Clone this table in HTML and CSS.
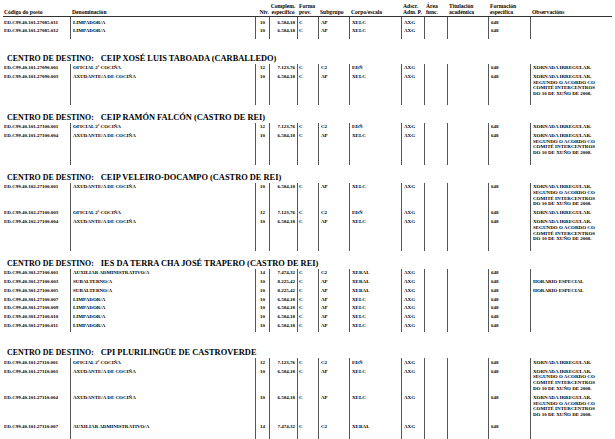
FILE: index.html
```html
<!DOCTYPE html>
<html lang="gl">
<head>
<meta charset="utf-8">
<title>Relación de postos</title>
<link rel="stylesheet" href="styles.css">
</head>
<body>
<div class="page">
  <div class="grid hdr">
    <span class="h">Código do posto</span>
    <span class="h">Denominación</span>
    <span class="h niv">Nív.</span>
    <span class="h comp">Complem.<br>específico</span>
    <span class="h">Forma<br>prov.</span>
    <span class="h">Subgrupo</span>
    <span class="h">Corpo/escala</span>
    <span class="h">Adscr.<br>Adm. P.</span>
    <span class="h">Área<br>func.</span>
    <span class="h">Titulación<br>académica</span>
    <span class="h">Formación<br>específica</span>
    <span class="h">Observacións</span>
  </div>

  <section class="sec">
    <div class="grid row first"><span>ED.C99.40.101.27085.011</span><span>LIMPADOR/A</span><span>10</span><span>6.584,18</span><span>C</span><span>AP</span><span>XELC</span><span>AXG</span><span></span><span></span><span>648</span><span></span></div>
    <div class="grid row"><span>ED.C99.40.101.27085.012</span><span>LIMPADOR/A</span><span>10</span><span>6.584,18</span><span>C</span><span>AP</span><span>XELC</span><span>AXG</span><span></span><span></span><span>648</span><span></span></div>
    <div class="grid row fill f3"><span></span><span></span><span></span><span></span><span></span><span></span><span></span><span></span><span></span><span></span><span></span><span></span></div>
  </section>

  <section class="sec">
    <h2 class="dest d1">CENTRO DE DESTINO:<span class="name">CEIP XOSÉ LUIS TABOADA (CARBALLEDO)</span></h2>
    <div class="grid row"><span>ED.C99.40.101.27090.001</span><span>OFICIAL 2ª COCIÑA</span><span>12</span><span>7.123,76</span><span>C</span><span>C2</span><span>EDÑ</span><span>AXG</span><span></span><span></span><span>648</span><span>XORNADA IRREGULAR.</span></div>
    <div class="grid row"><span>ED.C99.40.101.27090.003</span><span>AXUDANTE/A DE COCIÑA</span><span>10</span><span>6.584,18</span><span>C</span><span>AP</span><span>XELC</span><span>AXG</span><span></span><span></span><span>648</span><span>XORNADA IRREGULAR,<br>SEGUNDO O ACORDO CO<br>COMITÉ INTERCENTROS<br>DO 10 DE XUÑO DE 2008.</span></div>
    <div class="grid row fill f6"><span></span><span></span><span></span><span></span><span></span><span></span><span></span><span></span><span></span><span></span><span></span><span></span></div>
  </section>

  <section class="sec">
    <h2 class="dest">CENTRO DE DESTINO:<span class="name">CEIP RAMÓN FALCÓN (CASTRO DE REI)</span></h2>
    <div class="grid row"><span>ED.C99.40.101.27100.001</span><span>OFICIAL 2ª COCIÑA</span><span>12</span><span>7.123,76</span><span>C</span><span>C2</span><span>EDÑ</span><span>AXG</span><span></span><span></span><span>648</span><span>XORNADA IRREGULAR.</span></div>
    <div class="grid row"><span>ED.C99.40.101.27100.004</span><span>AXUDANTE/A DE COCIÑA</span><span>10</span><span>6.584,18</span><span>C</span><span>AP</span><span>XELC</span><span>AXG</span><span></span><span></span><span>648</span><span>XORNADA IRREGULAR,<br>SEGUNDO O ACORDO CO<br>COMITÉ INTERCENTROS<br>DO 10 DE XUÑO DE 2008.</span></div>
    <div class="grid row fill f7"><span></span><span></span><span></span><span></span><span></span><span></span><span></span><span></span><span></span><span></span><span></span><span></span></div>
  </section>

  <section class="sec">
    <h2 class="dest">CENTRO DE DESTINO:<span class="name">CEIP VELEIRO-DOCAMPO (CASTRO DE REI)</span></h2>
    <div class="grid row"><span>ED.C99.40.102.27100.001</span><span>AXUDANTE/A DE COCIÑA</span><span>10</span><span>6.584,18</span><span>C</span><span>AP</span><span>XELC</span><span>AXG</span><span></span><span></span><span>648</span><span>XORNADA IRREGULAR,<br>SEGUNDO O ACORDO CO<br>COMITÉ INTERCENTROS<br>DO 10 DE XUÑO DE 2008.</span></div>
    <div class="grid row"><span>ED.C99.40.102.27100.003</span><span>OFICIAL 2ª COCIÑA</span><span>12</span><span>7.123,76</span><span>C</span><span>C2</span><span>EDÑ</span><span>AXG</span><span></span><span></span><span>648</span><span>XORNADA IRREGULAR.</span></div>
    <div class="grid row"><span>ED.C99.40.102.27100.004</span><span>AXUDANTE/A DE COCIÑA</span><span>10</span><span>6.584,18</span><span>C</span><span>AP</span><span>XELC</span><span>AXG</span><span></span><span></span><span>648</span><span>XORNADA IRREGULAR,<br>SEGUNDO O ACORDO CO<br>COMITÉ INTERCENTROS<br>DO 10 DE XUÑO DE 2008.</span></div>
    <div class="grid row fill f7"><span></span><span></span><span></span><span></span><span></span><span></span><span></span><span></span><span></span><span></span><span></span><span></span></div>
  </section>

  <section class="sec">
    <h2 class="dest">CENTRO DE DESTINO:<span class="name">IES DA TERRA CHA JOSÉ TRAPERO (CASTRO DE REI)</span></h2>
    <div class="grid row"><span>ED.C99.40.301.27100.001</span><span>AUXILIAR ADMINISTRATIVO/A</span><span>14</span><span>7.474,32</span><span>C</span><span>C2</span><span>XERAL</span><span>AXG</span><span></span><span></span><span>648</span><span></span></div>
    <div class="grid row"><span>ED.C99.40.301.27100.003</span><span>SUBALTERNO/A</span><span>10</span><span>8.225,42</span><span>C</span><span>AP</span><span>XERAL</span><span>AXG</span><span></span><span></span><span>648</span><span>HORARIO ESPECIAL</span></div>
    <div class="grid row"><span>ED.C99.40.301.27100.005</span><span>SUBALTERNO/A</span><span>10</span><span>8.225,42</span><span>C</span><span>AP</span><span>XERAL</span><span>AXG</span><span></span><span></span><span>648</span><span>HORARIO ESPECIAL</span></div>
    <div class="grid row"><span>ED.C99.40.301.27100.007</span><span>LIMPADOR/A</span><span>10</span><span>6.584,18</span><span>C</span><span>AP</span><span>XELC</span><span>AXG</span><span></span><span></span><span>648</span><span></span></div>
    <div class="grid row"><span>ED.C99.40.301.27100.009</span><span>LIMPADOR/A</span><span>10</span><span>6.584,18</span><span>C</span><span>AP</span><span>XELC</span><span>AXG</span><span></span><span></span><span>648</span><span></span></div>
    <div class="grid row"><span>ED.C99.40.301.27100.010</span><span>LIMPADOR/A</span><span>10</span><span>6.584,18</span><span>C</span><span>AP</span><span>XELC</span><span>AXG</span><span></span><span></span><span>648</span><span></span></div>
    <div class="grid row"><span>ED.C99.40.301.27100.011</span><span>LIMPADOR/A</span><span>10</span><span>6.584,18</span><span>C</span><span>AP</span><span>XELC</span><span>AXG</span><span></span><span></span><span>648</span><span></span></div>
    <div class="grid row fill f2"><span></span><span></span><span></span><span></span><span></span><span></span><span></span><span></span><span></span><span></span><span></span><span></span></div>
  </section>

  <section class="sec">
    <h2 class="dest d5">CENTRO DE DESTINO:<span class="name">CPI PLURILINGÜE DE CASTROVERDE</span></h2>
    <div class="grid row"><span>ED.C99.40.101.27110.001</span><span>OFICIAL 2ª COCIÑA</span><span>12</span><span>7.123,76</span><span>C</span><span>C2</span><span>EDÑ</span><span>AXG</span><span></span><span></span><span>648</span><span>XORNADA IRREGULAR.</span></div>
    <div class="grid row"><span>ED.C99.40.101.27110.003</span><span>AXUDANTE/A DE COCIÑA</span><span>10</span><span>6.584,18</span><span>C</span><span>AP</span><span>XELC</span><span>AXG</span><span></span><span></span><span>648</span><span>XORNADA IRREGULAR,<br>SEGUNDO O ACORDO CO<br>COMITÉ INTERCENTROS<br>DO 10 DE XUÑO DE 2008.</span></div>
    <div class="grid row tall"><span>ED.C99.40.101.27110.004</span><span>AXUDANTE/A DE COCIÑA</span><span>10</span><span>6.584,18</span><span>C</span><span>AP</span><span>XELC</span><span>AXG</span><span></span><span></span><span>648</span><span>XORNADA IRREGULAR,<br>SEGUNDO O ACORDO CO<br>COMITÉ INTERCENTROS<br>DO 10 DE XUÑO DE 2008.</span></div>
    <div class="grid row"><span>ED.C99.40.101.27110.007</span><span>AUXILIAR ADMINISTRATIVO/A</span><span>14</span><span>7.474,32</span><span>C</span><span>C2</span><span>XERAL</span><span>AXG</span><span></span><span></span><span>648</span><span></span></div>
    <div class="grid row fill f8"><span></span><span></span><span></span><span></span><span></span><span></span><span></span><span></span><span></span><span></span><span></span><span></span></div>
  </section>
</div>
</body>
</html>
```
FILE: styles.css
```css
html, body {
  margin: 0;
  padding: 0;
  background: #ffffff;
  color: #000000;
}
body {
  width: 615px;
  height: 439px;
  overflow: hidden;
  font-family: "Liberation Serif", "Times New Roman", serif;
}
.page {
  padding: 0 3px;
}
.grid {
  display: grid;
  grid-template-columns: 67px 185px 14px 28px 21px 31px 52px 23px 23px 41px 42px 82px;
}
.hdr {
  height: 16px;
  border-bottom: 1px solid #333;
  align-items: end;
}
.h {
  font-size: 5.6px;
  line-height: 6px;
  font-weight: bold;
  white-space: nowrap;
  padding-left: 2px;
  padding-bottom: 1px;
}
.h:first-child {
  padding-left: 1px;
}
.h.niv {
  text-align: right;
}
.h.comp {
  text-align: center;
  padding-left: 0;
}
.row > span {
  font-size: 5px;
  line-height: 5.8px;
  font-weight: bold;
  white-space: nowrap;
  padding: 1.5px 0 1.5px 2px;
  border-left: 1px solid #555;
}
.row.first > span {
  padding-top: 2.5px;
}
.row.tall > span {
  padding-bottom: 4.5px;
}
.row > span:first-child {
  border-left: none;
  padding-left: 1px;
}
.row > span:nth-child(3) {
  text-align: center;
  padding-left: 0;
}
.row > span:nth-child(4) {
  text-align: right;
  padding-right: 2px;
}
.row > span:nth-child(5) {
  padding-left: 1px;
}
.fill > span {
  padding: 0;
}
.f2 { height: 2px; }
.f3 { height: 3px; }
.f6 { height: 6px; }
.f7 { height: 7px; }
.f8 { height: 8px; }
.dest {
  margin: 8px 0 0 0;
  padding-left: 4px;
  font-size: 7.9px;
  line-height: 10px;
  height: 10px;
  font-weight: bold;
  white-space: nowrap;
}
.dest.d1 {
  margin-top: 15px;
}
.dest.d5 {
  margin-top: 16px;
}
.dest .name {
  margin-left: 7px;
  font-size: 8.4px;
}
```
